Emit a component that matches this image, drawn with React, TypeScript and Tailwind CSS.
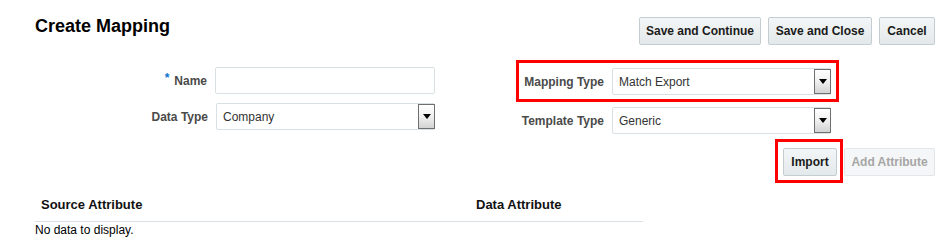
import React from 'react';

const font = "font-['Liberation_Sans',Arial,sans-serif]";

function ActionButton({ label, className = '' }: { label: string; className?: string }) {
  return (
    <button
      className={`h-[28px] px-0 whitespace-nowrap rounded-[2px] border border-[#c4cdd2] bg-gradient-to-b from-[#f3f6f7] to-[#e3e8ea] text-[12px] font-bold text-[#1a1a1a] leading-[16px] ${className}`}
    >
      {label}
    </button>
  );
}

function DropArrow() {
  return (
    <span className="w-[17px] -mr-[1px] flex items-center justify-center border border-[#6f6f6f] bg-gradient-to-b from-[#ffffff] via-[#f0f0f0] to-[#d3d3d3]">
      <svg width="8" height="5" viewBox="0 0 8 5" className="-mt-[1px]">
        <path d="M0 0h8L4 5z" fill="#000" />
      </svg>
    </span>
  );
}

function SelectBox({ value, width }: { value: string; width: string }) {
  return (
    <div className={`${width} h-[27px] flex items-stretch border border-[#d9e0e4] rounded-[2px] bg-white`}>
      <span className="flex-1 flex items-center pl-[6px] text-[12px] text-[#333]">{value}</span>
      <DropArrow />
    </div>
  );
}

function FieldLabel({ children, width }: { children: React.ReactNode; width: string }) {
  return (
    <span className={`${width} whitespace-nowrap text-right text-[12px] font-bold text-[#4a4a4a] leading-[16px]`}>{children}</span>
  );
}

export default function App() {
  return (
    <div className={`w-[942px] h-[245px] bg-white overflow-hidden ${font}`}>
      {/* header */}
      <div className="flex justify-between items-start pl-[35px] pr-[7px] pt-[15px]">
        <h1 className="text-[18px] font-bold leading-[22px] text-black">Create Mapping</h1>
        <div className="flex gap-[7px] mt-[2px]">
          <ActionButton label="Save and Continue" className="w-[122px]" />
          <ActionButton label="Save and Close" className="w-[104px]" />
          <ActionButton label="Cancel" className="w-[56px]" />
        </div>
      </div>

      {/* form */}
      <div className="flex items-start mt-[15px]">
        <div className="w-[435px] mt-[7px] flex flex-col gap-[9px]">
          <div className="flex items-center gap-[8px]">
            <FieldLabel width="w-[207px]">
              <span className="text-[#0a74d0] relative -top-[3px] mr-[5px]">*</span>Name
            </FieldLabel>
            <div className="w-[220px] h-[27px] border border-[#d9e0e4] rounded-[2px]" />
          </div>
          <div className="flex items-center gap-[8px]">
            <FieldLabel width="w-[208px]">Data Type</FieldLabel>
            <SelectBox value="Company" width="w-[219px]" />
          </div>
        </div>

        <div className="ml-[81px] flex flex-col">
          <div className="flex items-center gap-[8px] border-[3px] border-[#ff0000] pt-[5px] pb-[4px] pr-[5px]">
            <FieldLabel width="w-[85px]">Mapping Type</FieldLabel>
            <SelectBox value="Match Export" width="w-[219px]" />
          </div>
          <div className="flex items-center gap-[8px] mt-[5px]">
            <FieldLabel width="w-[88px]">Template Type</FieldLabel>
            <SelectBox value="Generic" width="w-[219px]" />
          </div>
        </div>
      </div>

      {/* import row */}
      <div className="flex justify-end items-start pr-[7px] mt-[5px]">
        <div className="border-[3px] border-[#ff0000] pl-[5px] pr-[3px] pt-[6px] pb-[4px]">
          <ActionButton label="Import" className="w-[54px]" />
        </div>
        <button className="ml-[1px] mt-[9px] w-[91px] h-[28px] whitespace-nowrap rounded-[2px] border border-[#e2e6e8] bg-[#f5f6f7] text-[12px] font-bold text-[#a6a6a6] leading-[16px]">
          Add Attribute
        </button>
      </div>

      {/* table */}
      <div className="ml-[35px] w-[608px]">
        <div className="flex border-b border-[#d9dfe3] pt-[13px] pb-[8px] text-[13px] font-bold leading-[17px] text-[#111]">
          <span className="w-[435px] pl-[6px]">Source Attribute</span>
          <span className="pl-[6px]">Data Attribute</span>
        </div>
        <div className="text-[12px] leading-[16px] text-black">No data to display.</div>
      </div>
    </div>
  );
}
